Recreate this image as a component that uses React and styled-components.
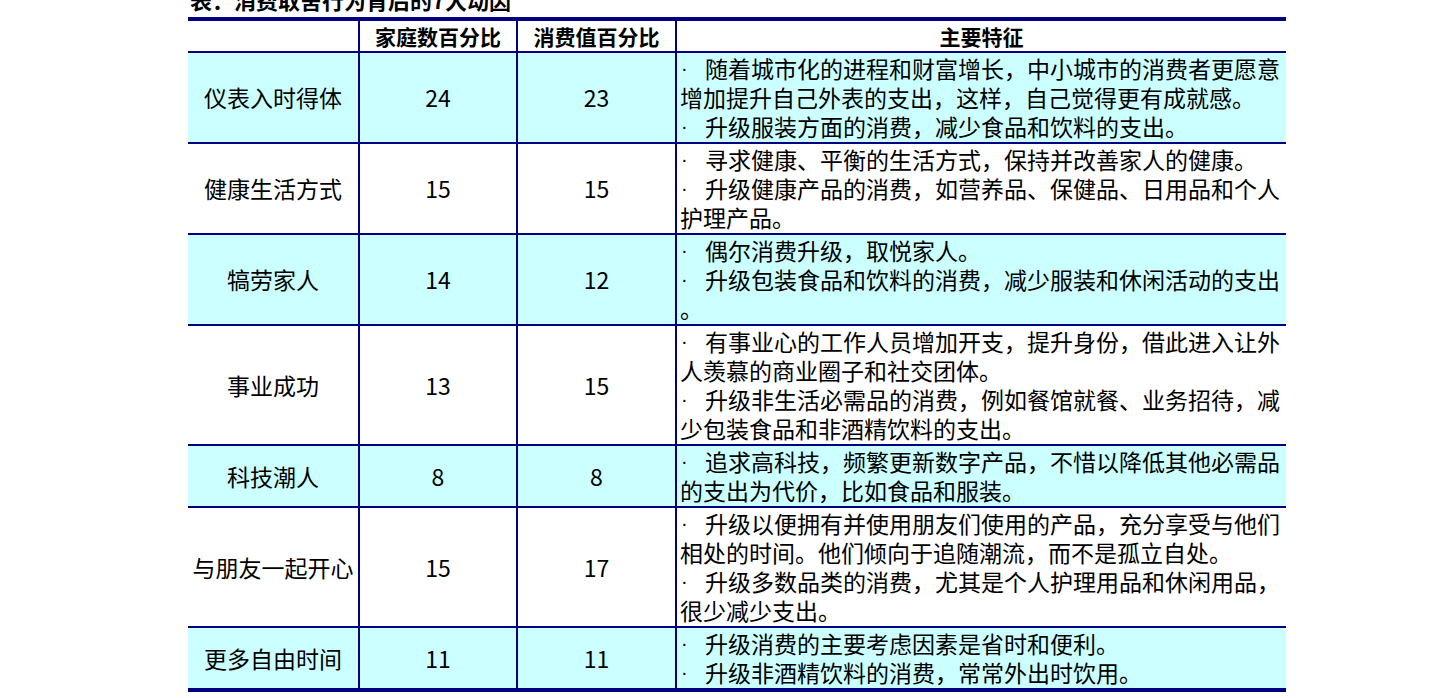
import React from 'react';
import styled, { createGlobalStyle } from 'styled-components';

const GlobalStyle = createGlobalStyle`
  html, body {
    margin: 0;
    padding: 0;
    background: #fff;
  }
  body {
    font-family: "Noto Sans CJK SC", "Noto Sans", sans-serif;
    color: #000;
    overflow: hidden;
  }
`;

const Page = styled.div`
  width: 1440px;
  height: 698px;
  padding-left: 188px;
  box-sizing: border-box;
  overflow: hidden;
`;

const Title = styled.div`
  margin-top: -19px;
  height: 36px;
  font-size: 22px;
  font-weight: 700;
  line-height: 36px;
  padding-left: 2px;
  white-space: nowrap;
`;

const Table = styled.table`
  width: 1098px;
  table-layout: fixed;
  border-collapse: collapse;
  border-top: 4px solid #000080;
  border-bottom: 4px solid #000080;
  font-size: 23px;
`;

const HeadCell = styled.th`
  height: 30px;
  padding: 0;
  font-size: 21px;
  font-weight: 700;
  line-height: 30px;
  text-align: center;
  border-bottom: 2px solid #000080;
  border-left: ${p => (p.$first ? 'none' : '2px solid #000080')};
  background: #fff;
`;

const Row = styled.tr`
  background: ${p => (p.$shade ? '#ccffff' : '#fff')};
  border-bottom: 2px solid #000080;
`;

const NameCell = styled.td`
  padding: 0;
  text-align: center;
  vertical-align: middle;
  white-space: nowrap;
  line-height: 29px;
`;

const NumCell = styled.td`
  padding: 0;
  text-align: center;
  vertical-align: middle;
  border-left: 2px solid #000080;
  line-height: 29px;
`;

const DescCell = styled.td`
  padding: 1px 4px 1px 3px;
  vertical-align: top;
  border-left: 2px solid #000080;
  line-height: 29px;
  line-break: anywhere;
  word-break: break-all;
`;

const Item = styled.div`
  text-align: left;
`;

const Bullet = styled.span`
  display: inline-block;
  vertical-align: top;
  width: 25px;
  height: 29px;
  line-height: 29px;
  font-family: "Liberation Sans", Arial, sans-serif;
  font-size: 20px;
  text-align: left;
  padding-left: 1px;
  box-sizing: border-box;
`;

const rows = [
  {
    name: '仪表入时得体', homes: 24, spend: 23,
    items: [
      '随着城市化的进程和财富增长，中小城市的消费者更愿意增加提升自己外表的支出，这样，自己觉得更有成就感。',
      '升级服装方面的消费，减少食品和饮料的支出。',
    ],
  },
  {
    name: '健康生活方式', homes: 15, spend: 15,
    items: [
      '寻求健康、平衡的生活方式，保持并改善家人的健康。',
      '升级健康产品的消费，如营养品、保健品、日用品和个人护理产品。',
    ],
  },
  {
    name: '犒劳家人', homes: 14, spend: 12,
    items: [
      '偶尔消费升级，取悦家人。',
      '升级包装食品和饮料的消费，减少服装和休闲活动的支出。',
    ],
  },
  {
    name: '事业成功', homes: 13, spend: 15,
    items: [
      '有事业心的工作人员增加开支，提升身份，借此进入让外人羡慕的商业圈子和社交团体。',
      '升级非生活必需品的消费，例如餐馆就餐、业务招待，减少包装食品和非酒精饮料的支出。',
    ],
  },
  {
    name: '科技潮人', homes: 8, spend: 8,
    items: [
      '追求高科技，频繁更新数字产品，不惜以降低其他必需品的支出为代价，比如食品和服装。',
    ],
  },
  {
    name: '与朋友一起开心', homes: 15, spend: 17,
    items: [
      '升级以便拥有并使用朋友们使用的产品，充分享受与他们相处的时间。他们倾向于追随潮流，而不是孤立自处。',
      '升级多数品类的消费，尤其是个人护理用品和休闲用品，很少减少支出。',
    ],
  },
  {
    name: '更多自由时间', homes: 11, spend: 11,
    items: [
      '升级消费的主要考虑因素是省时和便利。',
      '升级非酒精饮料的消费，常常外出时饮用。',
    ],
  },
];

const App = () => {
  return (
    <Page>
      <GlobalStyle />
      <Title>表：消费取舍行为背后的7大动因</Title>
      <Table>
        <colgroup>
          <col style={{ width: 171 }} />
          <col style={{ width: 158 }} />
          <col style={{ width: 159 }} />
          <col style={{ width: 610 }} />
        </colgroup>
        <thead>
          <tr>
            <HeadCell $first></HeadCell>
            <HeadCell>家庭数百分比</HeadCell>
            <HeadCell>消费值百分比</HeadCell>
            <HeadCell>主要特征</HeadCell>
          </tr>
        </thead>
        <tbody>
          {rows.map((r, i) => (
            <Row key={r.name} $shade={i % 2 === 0}>
              <NameCell>{r.name}</NameCell>
              <NumCell>{r.homes}</NumCell>
              <NumCell>{r.spend}</NumCell>
              <DescCell>
                {r.items.map(t => (
                  <Item key={t}>
                    <Bullet>·</Bullet>
                    {t}
                  </Item>
                ))}
              </DescCell>
            </Row>
          ))}
        </tbody>
      </Table>
    </Page>
  );
};

export default App;
